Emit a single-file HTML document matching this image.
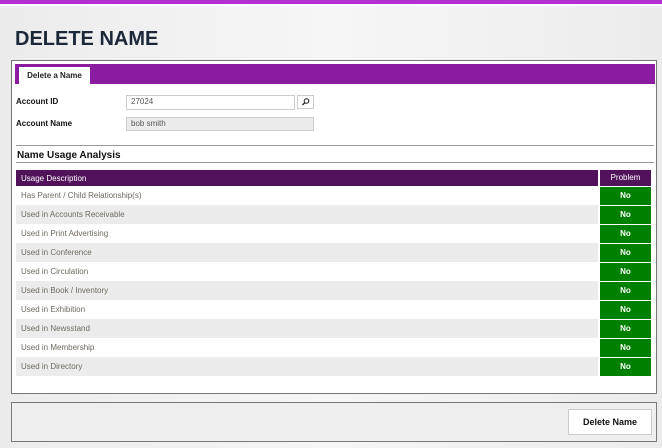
<!DOCTYPE html>
<html><head><style>
*{margin:0;padding:0;box-sizing:border-box}
body{width:662px;height:448px;overflow:hidden;background:linear-gradient(90deg,#ececec,#f6f6f6 50%,#ececec);font-family:"Liberation Sans",sans-serif;position:relative}
.top{position:absolute;left:0;top:0;width:662px;height:4px;background:#b42fd2}
.topw{position:absolute;left:0;top:4px;width:662px;height:2px;background:#fff}
h1{position:absolute;left:15px;top:28px;font-size:20px;font-weight:bold;color:#1c2838;letter-spacing:0}
.panel{position:absolute;left:11px;top:60px;width:646px;height:334px;border:1px solid #777;background:#fff}
.tabbar{position:absolute;left:3px;top:3px;width:640px;height:20px;background:#8b1ca1}
.tab{position:absolute;left:4px;top:3px;width:71px;height:17px;background:#fff;font-size:8px;font-weight:bold;color:#222;text-align:center;line-height:17px}
.lbl{position:absolute;font-size:8px;font-weight:bold;color:#111}
.inp{position:absolute;border:1px solid #ccc;font-size:8px;color:#555;padding-left:4px;line-height:12px}
.line{position:absolute;left:4px;width:638px;height:1px;background:#999}
.sec{position:absolute;left:5px;top:89px;font-size:10px;font-weight:bold;color:#111}
table{position:absolute;left:4px;top:109px;width:635px;border-collapse:collapse}
td{height:19px;font-size:8px;color:#6f6a60;padding-left:5px;background:#fff}
tr.g td{background:#ececec}
td.p{width:52px;background:#008000!important;color:#fff;font-weight:bold;text-align:center;padding:0;border-left:2px solid #fff;border-top:1px solid #fff}
th{height:16px;background:#51125b;color:#fff;font-size:8px;font-weight:normal;text-align:left;padding-left:5px}
th.p{text-align:center;padding:0;border-left:2px solid #fff}
.bot{position:absolute;left:11px;top:402px;width:646px;height:40px;border:1px solid #777;background:#efefef}
.btn{position:absolute;left:556px;top:6px;width:84px;height:26px;background:#fff;border:1px solid #ccc;font-size:9px;font-weight:bold;color:#111;text-align:center;line-height:24px}
</style></head><body>
<div class="top"></div><div class="topw"></div>
<h1>DELETE NAME</h1>
<div class="panel">
<div class="tabbar"><div class="tab">Delete a Name</div></div>
<div class="lbl" style="left:4px;top:36px">Account ID</div>
<div class="inp" style="left:114px;top:34px;width:169px;height:15px;background:#fff">27024</div>
<div class="inp" style="left:285px;top:34px;width:17px;height:14px;background:#fff;padding:0"><svg width="15" height="12" viewBox="0 0 15 12"><circle cx="8.5" cy="5" r="2.3" fill="none" stroke="#222" stroke-width="1"/><line x1="7" y1="6.5" x2="4.5" y2="9" stroke="#222" stroke-width="1.3"/></svg></div>
<div class="lbl" style="left:4px;top:58px">Account Name</div>
<div class="inp" style="left:114px;top:56px;width:188px;height:14px;background:#ececec">bob smith</div>
<div class="line" style="top:84px"></div>
<div class="sec">Name Usage Analysis</div>
<div class="line" style="top:101px"></div>
<table>
<tr><th>Usage Description</th><th class="p">Problem</th></tr>
<tr><td>Has Parent / Child Relationship(s)</td><td class="p">No</td></tr>
<tr class="g"><td>Used in Accounts Receivable</td><td class="p">No</td></tr>
<tr><td>Used in Print Advertising</td><td class="p">No</td></tr>
<tr class="g"><td>Used in Conference</td><td class="p">No</td></tr>
<tr><td>Used in Circulation</td><td class="p">No</td></tr>
<tr class="g"><td>Used in Book / Inventory</td><td class="p">No</td></tr>
<tr><td>Used in Exhibition</td><td class="p">No</td></tr>
<tr class="g"><td>Used in Newsstand</td><td class="p">No</td></tr>
<tr><td>Used in Membership</td><td class="p">No</td></tr>
<tr class="g"><td>Used in Directory</td><td class="p">No</td></tr>
</table>
</div>
<div class="bot"><div class="btn">Delete Name</div></div>
</body></html>
